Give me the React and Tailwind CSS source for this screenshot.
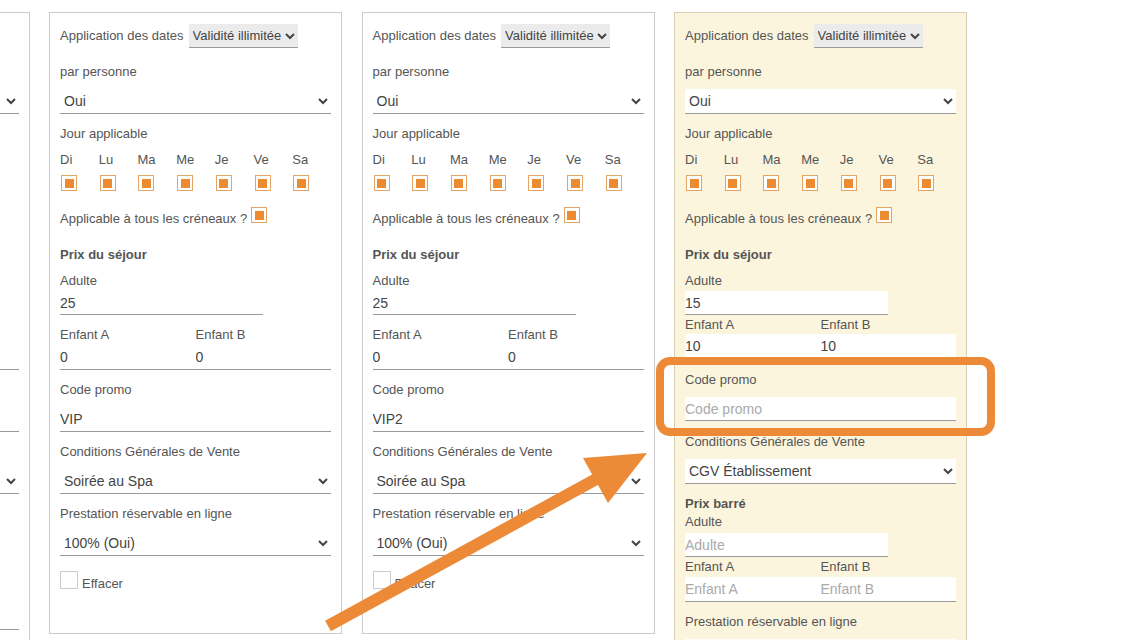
import React from 'react'

const days = ['Di', 'Lu', 'Ma', 'Me', 'Je', 'Ve', 'Sa']

function Label({ className = '', children }) {
  return <div className={`text-[13px] leading-[18px] ${className}`}>{children}</div>
}

function OrangeBox({ className = '' }) {
  return (
    <span className={`flex h-4 w-4 shrink-0 items-center justify-center border border-[#e4a463] bg-white ${className}`}>
      <span className="h-[9px] w-[9px] bg-[#ec8b30]" />
    </span>
  )
}

function Select({ value, cream, className = '' }) {
  return (
    <select
      defaultValue={value}
      className={`block h-[25px] w-full border-b border-[#9a9a9a] text-[14px] text-[#444] outline-none ${cream ? 'bg-white' : 'bg-transparent'} ${className}`}
    >
      <option>{value}</option>
    </select>
  )
}

function Input({ value, placeholder, cream, narrow, className = '' }) {
  return (
    <input
      defaultValue={value}
      placeholder={placeholder}
      className={`block h-6 text-[14px] text-[#444] outline-none placeholder:text-[#aaa] ${narrow ? 'w-3/4' : 'w-full'} ${cream ? 'bg-white' : 'bg-transparent'} ${className}`}
    />
  )
}

function Top({ cream }) {
  return (
    <>
      <div className="flex h-6 items-center gap-[5px]">
        <Label>Application des dates</Label>
        <select
          defaultValue="Validité illimitée"
          className="h-6 border-b border-[#9a9a9a] bg-[#ebebeb] text-[13px] text-[#444] outline-none"
        >
          <option>Validité illimitée</option>
        </select>
      </div>
      <Label className="mt-[15px]">par personne</Label>
      <Select value="Oui" cream={cream} className="mt-2" />
      <Label className="mt-[11px]">Jour applicable</Label>
      <div className="mt-2 grid grid-cols-7">
        {days.map((d) => (
          <Label key={d}>{d}</Label>
        ))}
      </div>
      <div className="mt-[6px] grid grid-cols-7">
        {days.map((d) => (
          <OrangeBox key={d} className="ml-px" />
        ))}
      </div>
      <div className="mt-4 flex items-start">
        <Label className="mt-[3px]">Applicable à tous les créneaux ?</Label>
        <OrangeBox className="ml-[4px]" />
      </div>
      <Label className="mt-[18px] font-bold">Prix du séjour</Label>
      <Label className="mt-2">Adulte</Label>
    </>
  )
}

function WhiteColumn({ promo, partial }) {
  return (
    <div className="w-[293px] shrink-0 border border-[#cccccc] bg-white px-[10px] pt-[11px] pb-10">
      <Top />
      <Input value="25" narrow className="mt-px border-b border-[#9a9a9a]" />
      <div className="mt-[11px] grid grid-cols-2">
        <Label>Enfant A</Label>
        <Label>Enfant B</Label>
      </div>
      <div className="mt-px grid grid-cols-2 border-b border-[#9a9a9a]">
        <Input value="0" />
        <Input value="0" />
      </div>
      <Label className="mt-[11px]">Code promo</Label>
      <Input value={promo} className="mt-2 h-[25px] border-b border-[#9a9a9a]" />
      <Label className="mt-[11px]">Conditions Générales de Vente</Label>
      <Select value="Soirée au Spa" className="mt-2" />
      {partial ? (
        <>
          <Label className="mt-[11px] font-bold">Prix barré</Label>
          <Label className="mt-2">Adulte</Label>
          <Input placeholder="Adulte" narrow className="mt-px border-b border-[#9a9a9a]" />
          <div className="mt-[11px] grid grid-cols-2">
            <Label>Enfant A</Label>
            <Label>Enfant B</Label>
          </div>
          <div className="mt-[2px] grid grid-cols-2 border-b border-[#9a9a9a]">
            <Input placeholder="Enfant A" />
            <Input placeholder="Enfant B" />
          </div>
        </>
      ) : (
        <>
          <Label className="mt-[11px]">Prestation réservable en ligne</Label>
          <Select value="100% (Oui)" className="mt-2" />
          <div className="mt-[15px] flex items-start gap-1">
            <span className="h-[18px] w-[18px] border border-[#cccccc] bg-white" />
            <Label className="mt-[4px]">Effacer</Label>
          </div>
        </>
      )}
    </div>
  )
}

function CreamColumn() {
  return (
    <div className="w-[293px] shrink-0 border border-[#d9d0b4] bg-[#fcf5de] px-[10px] pt-[11px] pb-10">
      <Top cream />
      <Input value="15" cream narrow className="mt-px border-b border-[#9a9a9a]" />
      <div className="mt-px grid grid-cols-2">
        <Label>Enfant A</Label>
        <Label>Enfant B</Label>
      </div>
      <div className="mt-0 grid grid-cols-2 border-b border-[#9a9a9a] bg-white">
        <Input value="10" cream />
        <Input value="10" cream />
      </div>
      <Label className="mt-3">Code promo</Label>
      <Input placeholder="Code promo" cream className="mt-2 border-b border-[#9a9a9a]" />
      <Label className="mt-3">Conditions Générales de Vente</Label>
      <Select value="CGV Établissement" cream className="mt-2" />
      <Label className="mt-[11px] font-bold">Prix barré</Label>
      <Label>Adulte</Label>
      <Input placeholder="Adulte" cream narrow className="mt-[2px] border-b border-[#9a9a9a]" />
      <div className="mt-px grid grid-cols-2">
        <Label>Enfant A</Label>
        <Label>Enfant B</Label>
      </div>
      <div className="mt-px grid grid-cols-2 border-b border-[#9a9a9a] bg-white">
        <Input placeholder="Enfant A" cream />
        <Input placeholder="Enfant B" cream />
      </div>
      <Label className="mt-[11px]">Prestation réservable en ligne</Label>
      <Select value="100% (Oui)" cream className="mt-2" />
    </div>
  )
}

export default function App() {
  return (
    <div className="relative h-[640px] w-[1147px] overflow-hidden bg-white font-['Liberation_Sans',Arial,sans-serif] text-[#555]">
      <div className="-ml-[263.5px] mt-3 flex items-start gap-[19.5px]">
        <WhiteColumn promo="VIP" partial />
        <WhiteColumn promo="VIP" />
        <WhiteColumn promo="VIP2" />
        <CreamColumn />
      </div>

      {/* annotation overlay */}
      <svg className="pointer-events-none absolute top-0 left-0" width="1147" height="640" viewBox="0 0 1147 640">
        <rect x="660" y="361" width="331" height="71" rx="10" fill="none" stroke="#ec8a37" strokeWidth="8" />
        <line x1="328" y1="626" x2="600" y2="477" stroke="#ec8a37" strokeWidth="12" />
        <polygon points="583,458 647,453 608,503" fill="#ec8a37" />
      </svg>
    </div>
  )
}
